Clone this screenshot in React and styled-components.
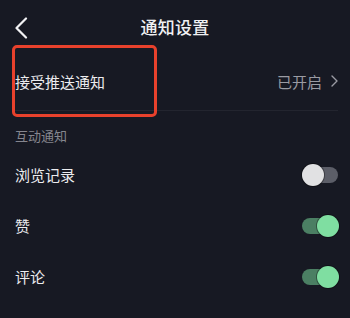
import React, { useState } from 'react';
import styled, { createGlobalStyle } from 'styled-components';

const GlobalStyle = createGlobalStyle`
  html, body {
    margin: 0;
    padding: 0;
    background: #171923;
  }
  body {
    font-family: "Noto Sans CJK SC", "Noto Sans", sans-serif;
    color: #e9e9ec;
  }
`;

const Page = styled.div`
  width: 350px;
  height: 318px;
  background: #171923;
  overflow: hidden;
`;

const Header = styled.div`
  height: 52px;
  display: flex;
  align-items: center;
  justify-content: center;
  position: relative;
`;

const BackButton = styled.div`
  position: absolute;
  left: 14px;
  top: 16px;
  width: 16px;
  height: 24px;
  display: flex;
  align-items: center;
`;

const Title = styled.h1`
  margin: 0;
  font-size: 17px;
  font-weight: 500;
  color: #f0f0f2;
  letter-spacing: 0.3px;
`;

const PushRow = styled.div`
  position: relative;
  height: 58px;
  margin: 0 12px 0 15px;
  display: flex;
  align-items: center;
  justify-content: space-between;
  border-bottom: 1px solid #23252f;
`;

const Highlight = styled.div`
  position: absolute;
  left: -3px;
  top: -7px;
  width: 139px;
  height: 66px;
  border: 3px solid #e8412c;
  border-radius: 5px;
  pointer-events: none;
`;

const Label = styled.span`
  font-size: 15px;
  color: #ececef;
`;

const Status = styled.div`
  display: flex;
  align-items: center;
  gap: 9px;
  font-size: 15px;
  color: #9a9ba3;
`;

const SectionTitle = styled.div`
  padding: 18px 15px 6px;
  font-size: 13px;
  color: #85868e;
  line-height: 14px;
`;

const Row = styled.div`
  height: 51px;
  margin: 0 12px 0 15px;
  display: flex;
  align-items: center;
  justify-content: space-between;
`;

const Track = styled.div`
  position: relative;
  width: 36px;
  height: 16px;
  border-radius: 8px;
  background: ${p => (p.on ? '#4b7f63' : '#5c5e68')};
  cursor: pointer;
`;

const Knob = styled.div`
  position: absolute;
  top: -3px;
  left: ${p => (p.on ? '15px' : '0')};
  width: 22px;
  height: 22px;
  border-radius: 50%;
  background: ${p => (p.on ? '#7fdea1' : '#e1e1e3')};
  box-shadow: 0 0 0 1px rgba(0, 0, 0, 0.35);
`;

function Toggle({ on, onChange }) {
  return (
    <Track on={on} onClick={onChange}>
      <Knob on={on} />
    </Track>
  );
}

export default function App() {
  const [items, setItems] = useState([
    { name: '浏览记录', on: false },
    { name: '赞', on: true },
    { name: '评论', on: true },
  ]);

  const flip = i => {
    setItems(items.map((it, j) => (j === i ? { ...it, on: !it.on } : it)));
  };

  return (
    <Page>
      <GlobalStyle />
      <Header>
        <BackButton>
          <svg width="14" height="22" viewBox="0 0 14 22">
            <polyline points="12,1.5 2.5,11 12,20.5" fill="none" stroke="#f2f2f4" strokeWidth="2.2" strokeLinecap="round" strokeLinejoin="round" />
          </svg>
        </BackButton>
        <Title>通知设置</Title>
      </Header>

      <PushRow>
        <Highlight />
        <Label>接受推送通知</Label>
        <Status>
          已开启
          <svg width="7" height="12" viewBox="0 0 7 12">
            <polyline points="1,1 6,6 1,11" fill="none" stroke="#9a9ba3" strokeWidth="1.4" strokeLinecap="round" strokeLinejoin="round" />
          </svg>
        </Status>
      </PushRow>

      <SectionTitle>互动通知</SectionTitle>

      {items.map((it, i) => (
        <Row key={it.name}>
          <Label>{it.name}</Label>
          <Toggle on={it.on} onChange={() => flip(i)} />
        </Row>
      ))}
    </Page>
  );
}
